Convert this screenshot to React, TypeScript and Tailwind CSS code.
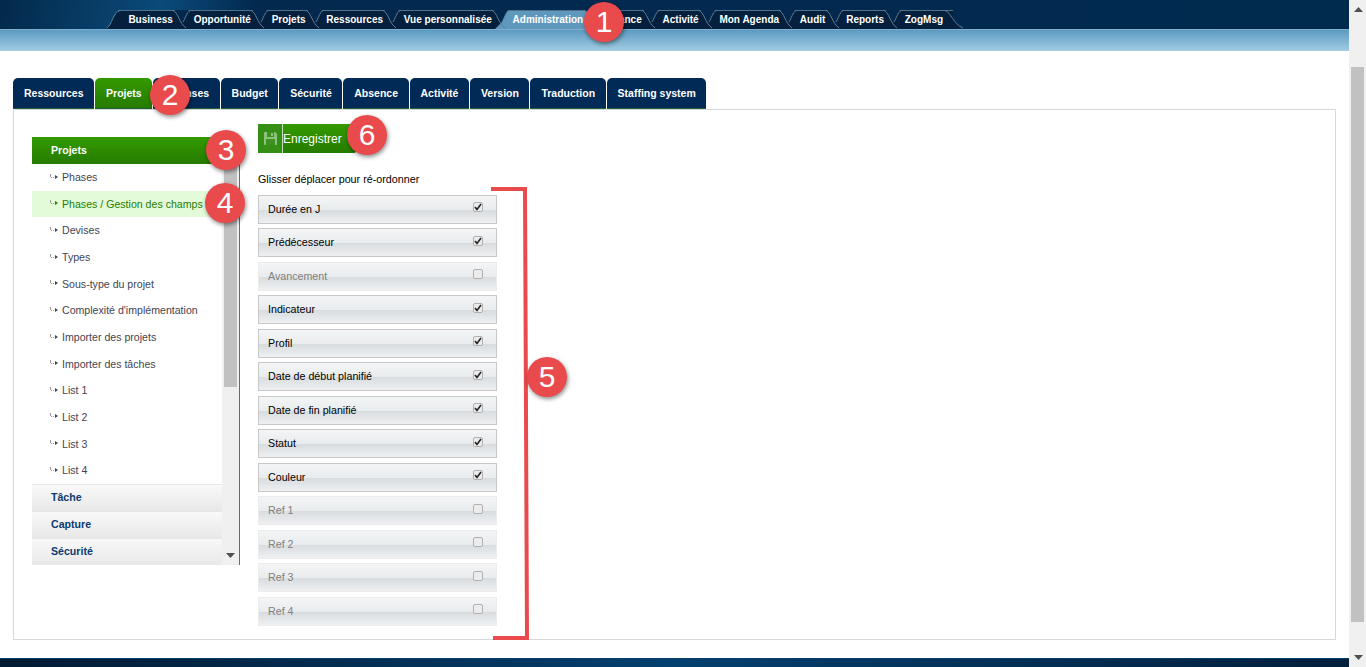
const topTabs = ['Business', 'Opportunité', 'Projets', 'Ressources', 'Vue personnalisée', 'Administration', 'Finance', 'Activité', 'Mon Agenda', 'Audit', 'Reports', 'ZogMsg'];
const subTabs = ['Ressources', 'Projets', 'Licenses', 'Budget', 'Sécurité', 'Absence', 'Activité', 'Version', 'Traduction', 'Staffing system'];
const menuItems = ['Phases', 'Phases / Gestion des champs', 'Devises', 'Types', 'Sous-type du projet', "Complexité d'implémentation", 'Importer des projets', 'Importer des tâches', 'List 1', 'List 2', 'List 3', 'List 4'];
const fields = [
  { label: 'Durée en J', on: true },
  { label: 'Prédécesseur', on: true },
  { label: 'Avancement', on: false },
  { label: 'Indicateur', on: true },
  { label: 'Profil', on: true },
  { label: 'Date de début planifié', on: true },
  { label: 'Date de fin planifié', on: true },
  { label: 'Statut', on: true },
  { label: 'Couleur', on: true },
  { label: 'Ref 1', on: false },
  { label: 'Ref 2', on: false },
  { label: 'Ref 3', on: false },
  { label: 'Ref 4', on: false },
];

function Badge({ n, className }: { n: number; className: string }) {
  return (
    <div className={`absolute flex h-10 w-10 items-center justify-center rounded-full bg-[#e94b4d] text-[30px] leading-none text-white shadow-[1px_2px_4px_rgba(0,0,0,0.45)] ${className}`}>
      {n}
    </div>
  );
}

function TopTab({ label, index }: { label: string; index: number }) {
  const active = label === 'Administration';
  const first = index === 0;
  const last = index === topTabs.length - 1;
  return (
    <div className={`relative flex h-[19px] items-center border-t border-[#4f7089] px-[10.4px] pb-[2px] text-[10px] font-bold text-white ${active ? 'bg-[#5f98bd]' : 'bg-[#04203c]'}`}>
      {first ? (
        <svg className="absolute left-[-11px] top-[-1px]" width="14" height="19" viewBox="0 0 14 19" fill="none">
          <path d="M0 18 C5 15 6 2 13 .5 L14 .5 L14 19 L0 19 Z" fill="#04203c" />
          <path d="M0 18 C5 15 6 2 13 .5 L14 .5" stroke="#5f7f97" />
        </svg>
      ) : (
        <svg className="absolute left-[-11px] top-[-1px]" width="19" height="19" viewBox="0 0 19 19" fill="none">
          {active && <path d="M4 19 L11 12 L18 1 L18 19 Z" fill="#5f98bd" />}
          <path d="M1 -0.5 C6 1 7 10 11 12 C13 9 15 1 18 -0.5 Z" fill="#02294d" />
          <path d="M1 .5 C6 2 7 13 14 18" stroke="#5f7f97" />
          <path d="M11 12 C13 9 15 2 18 .5" stroke="#5f7f97" />
        </svg>
      )}
      {last && (
        <svg className="absolute right-[-10px] top-[-1px]" width="20" height="19" viewBox="0 0 20 19" fill="none">
          <path d="M0 .5 L2 .5 C8 2 10 14 20 18 L0 19 Z" fill="#04203c" />
          <path d="M0 .5 L2 .5 C8 2 10 14 20 18" stroke="#5f7f97" />
        </svg>
      )}
      <span className="relative">{label}</span>
    </div>
  );
}

function SubArrow({ active }: { active: boolean }) {
  const c = active ? '#267b00' : '#444444';
  return (
    <svg className="mb-[3px] mr-[4px] shrink-0" width="8" height="6" viewBox="0 0 8 6">
      <rect x="0" y="0" width="1" height="3" fill="#999" />
      <rect x="1" y="3" width="1" height="1" fill="#999" />
      <rect x="3" y="3" width="1" height="1" fill="#999" />
      <path d="M5 1 L8 3 L5 5 Z" fill={c} />
    </svg>
  );
}

export default function App() {
  return (
    <div className="relative flex h-[667px] w-[1366px] overflow-hidden bg-white font-['Liberation_Sans',Arial,sans-serif]">
      <div className="flex w-[1349px] flex-col">
        <header className="h-[29px] bg-[linear-gradient(100deg,#03294b_0%,#0b4a7a_12%,#03294f_19%,#012a4f_100%)]">
          <div className="flex pl-[118px] pt-[10px]">
            {topTabs.map((t, i) => (
              <TopTab key={t} label={t} index={i} />
            ))}
          </div>
        </header>
        <div className="h-[22px] border-t border-[#82aecb] bg-gradient-to-b from-[#5c9ac2] to-[#a2cde3]" />

        <nav className="mt-[27px] flex gap-[1px] pl-[13px]">
          {subTabs.map((t) => (
            <div
              key={t}
              className={`flex h-[31px] items-center rounded-t-[5px] border-b border-[#1f5a3a] pl-[11px] pr-[10.5px] pt-[2px] text-[10.5px] font-bold text-white ${t === 'Projets' ? 'bg-gradient-to-b from-[#339a00] to-[#267b00]' : 'bg-[#012a56]'}`}
            >
              {t}
            </div>
          ))}
        </nav>

        <main className="ml-[13px] flex h-[531px] w-[1323px] border border-[#d8d8d8] pl-[18px] pt-[27px]">
          <aside className="flex h-[428px] w-[208px] border-r border-[#339a00]">
            <div className="flex w-[190px] flex-col">
              <div className="flex h-[27px] items-center bg-gradient-to-b from-[#339a00] to-[#267b00] pl-[19px] text-[10.6px] font-bold text-white">Projets</div>
              {menuItems.map((m, i) => (
                <div key={m} className={`flex h-[26.67px] items-center pl-[18px] pt-[1.5px] text-[10.6px] ${i === 1 ? 'bg-[#e4fbd9] text-[#267b00]' : 'text-[#444450]'}`}>
                  <SubArrow active={i === 1} />
                  {m}
                </div>
              ))}
              {['Tâche', 'Capture', 'Sécurité'].map((s) => (
                <div key={s} className="flex h-[27px] items-center border-t border-[#e6e6e6] bg-gradient-to-b from-[#f9f9f9] to-[#e8e8e8] pl-[19px] text-[10.6px] font-bold text-[#0b3a70]">{s}</div>
              ))}
            </div>
            <div className="relative w-[17px] bg-[#f0f0f0]">
              <div className="ml-[2px] mt-[17px] h-[233px] w-[13px] bg-[#c1c1c1]" />
              <svg className="absolute bottom-[7px] left-[4px]" width="9" height="5"><path d="M0 0 H9 L4.5 5 Z" fill="#505050" /></svg>
            </div>
          </aside>

          <section className="ml-[18px] w-[239px]">
            <button className="flex h-[29px] w-[98px] -translate-y-[13px] items-center rounded-[2px] bg-gradient-to-b from-[#339a00] to-[#267b00] text-[12px] text-white">
              <span className="flex h-full w-[25px] items-center justify-center border-r border-white/70 bg-[#348f14]">
                <svg width="15" height="15" viewBox="0 0 15 15">
                  <path d="M1 2 Q1 1 2 1 H12 L14 3 V13 Q14 14 13 14 H2 Q1 14 1 13 Z" fill="#8cc37a" />
                  <rect x="4" y="1" width="7" height="5" fill="#3f8f22" />
                  <rect x="8" y="2" width="2" height="3" fill="#8cc37a" />
                  <rect x="3" y="8" width="9" height="6" fill="#3f8f22" />
                </svg>
              </span>
              <span>Enregistrer</span>
            </button>
            <p className="mt-[7px] text-[10.75px] leading-[12px] text-black">Glisser déplacer pour ré-ordonner</p>
            <ul className="mt-[9.5px] flex flex-col gap-[4.5px]">
              {fields.map((f) => (
                <li key={f.label} className={`flex h-[29px] items-center justify-between border bg-[linear-gradient(#f3f5f6_0%,#e9ecee_50%,#d8dcdf_52%,#eef0f2_100%)] pl-[9px] pr-[13px] text-[10.7px] ${f.on ? 'border-[#c8c8c8] text-black' : 'border-[#ececec] text-[#808080]'}`}>
                  <span>{f.label}</span>
                  <span className="flex h-[10px] w-[10px] -translate-y-[2px] items-center justify-center rounded-[2px] border border-[#b0b0b0] bg-[#ececec]">
                    {f.on && (
                      <svg width="8" height="8" viewBox="0 0 8 8" fill="none"><path d="M1 4 L3 6.5 L7 1" stroke="#222" strokeWidth="1.6" /></svg>
                    )}
                  </span>
                </li>
              ))}
            </ul>
          </section>
        </main>

        <div className="mt-[18px] h-[9px] border-t border-[#06406f] bg-gradient-to-r from-[#021a33] via-[#03406f] to-[#021f3c]" />
      </div>

      <div className="relative w-[17px] bg-[#f0f0f0]">
        <svg className="absolute left-[5px] top-[7px]" width="9" height="5"><path d="M0 5 H9 L4.5 0 Z" fill="#505050" /></svg>
        <div className="absolute left-[2px] top-[67px] h-[555px] w-[13px] bg-[#c1c1c1]" />
        <svg className="absolute bottom-[7px] left-[5px]" width="9" height="5"><path d="M0 0 H9 L4.5 5 Z" fill="#505050" /></svg>
      </div>

      <svg className="absolute left-[488px] top-[186px]" width="42" height="456" fill="none" stroke="#e94b4d" strokeWidth="4">
        <path d="M3 3 H37 L39 452 H5" />
      </svg>
      <Badge n={1} className="left-[584px] top-[2px]" />
      <Badge n={2} className="left-[150px] top-[75px]" />
      <Badge n={3} className="left-[206px] top-[130px]" />
      <Badge n={4} className="left-[205px] top-[183px]" />
      <Badge n={5} className="left-[527px] top-[357px]" />
      <Badge n={6} className="left-[347px] top-[115px]" />
    </div>
  );
}
